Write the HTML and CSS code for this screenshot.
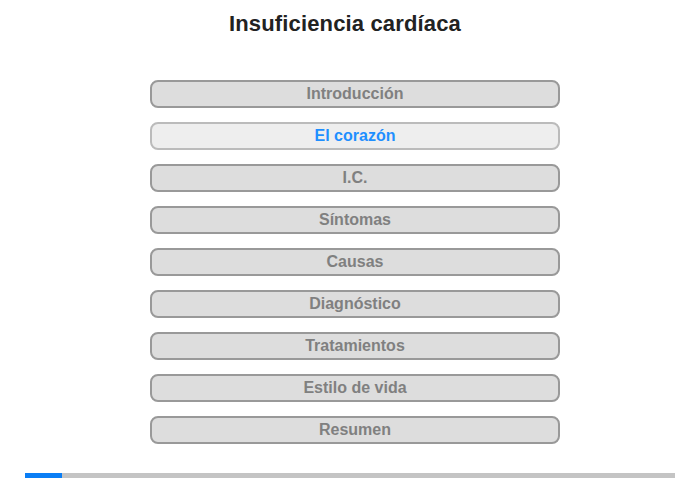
FILE: index.html
```html
<!DOCTYPE html>
<html lang="es">
<head>
<meta charset="utf-8">
<title>Insuficiencia cardíaca</title>
<link rel="stylesheet" href="styles.css">
</head>
<body>
<div class="page">
  <h1 class="title">Insuficiencia cardíaca</h1>
  <nav class="menu">
    <div class="item">Introducción</div>
    <div class="item active">El corazón</div>
    <div class="item">I.C.</div>
    <div class="item">Síntomas</div>
    <div class="item">Causas</div>
    <div class="item">Diagnóstico</div>
    <div class="item">Tratamientos</div>
    <div class="item">Estilo de vida</div>
    <div class="item">Resumen</div>
  </nav>
  <div class="progress"><div class="progress-fill" style="width:37px"></div></div>
</div>
</body>
</html>
```
FILE: styles.css
```css
html, body {
  margin: 0;
  padding: 0;
  background: #fff;
}
.page {
  width: 700px;
  height: 480px;
  font-family: "Liberation Sans", Arial, sans-serif;
  display: flex;
  flex-direction: column;
  align-items: center;
}
.title {
  margin: 11px 0 0;
  padding-right: 10px;
  font-size: 22px;
  line-height: 26px;
  font-weight: bold;
  letter-spacing: 0.15px;
  color: #222;
  text-align: center;
}
.menu {
  align-self: flex-start;
  margin: 43px 0 0 150px;
  display: flex;
  flex-direction: column;
  gap: 14px;
}
.item {
  box-sizing: border-box;
  width: 410px;
  height: 28px;
  border: 2px solid #999;
  border-radius: 8px;
  background: #ddd;
  color: #808080;
  font-weight: bold;
  font-size: 16px;
  line-height: 24px;
  text-align: center;
}
.item.active {
  background: #eee;
  border-color: #bbb;
  color: #1e8fff;
}
.progress {
  margin-top: 29px;
  width: 650px;
  height: 5px;
  background: #c4c4c4;
}
.progress-fill {
  height: 100%;
  background: #0a7ef5;
}
```
